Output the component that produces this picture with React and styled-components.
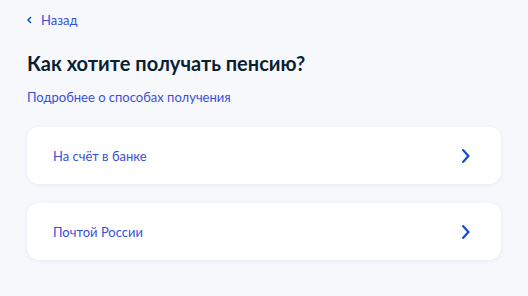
import React from "react";
import styled, { createGlobalStyle } from "styled-components";

const Global = createGlobalStyle`
  html, body { margin: 0; padding: 0; background: #f6f8fc; }
  body { font-family: Lato, "Noto Sans", sans-serif; }
`;

const Page = styled.div`
  box-sizing: border-box;
  width: 528px;
  min-height: 296px;
  padding: 11px 27px 0 27px;
  background: #f6f8fc;
  display: flex;
  flex-direction: column;
`;

const Back = styled.a`
  display: flex;
  align-items: center;
  gap: 9px;
  font-size: 13px;
  line-height: 18px;
  color: #3a50d6;
  text-decoration: none;
`;

const Title = styled.h1`
  margin: 21px 0 0 0;
  font-size: 20px;
  line-height: 26px;
  font-weight: 700;
  color: #0b1f33;
`;

const More = styled.a`
  margin-top: 11px;
  font-size: 13px;
  line-height: 20px;
  color: #3a50d6;
  text-decoration: none;
`;

const List = styled.div`
  margin-top: 20px;
  display: flex;
  flex-direction: column;
  gap: 19px;
  width: 474px;
`;

const Card = styled.div`
  height: 57px;
  box-sizing: border-box;
  padding: 0 31px 0 26px;
  background: #fff;
  border-radius: 12px;
  box-shadow: 0 1px 4px rgba(40, 70, 140, 0.08);
  display: flex;
  align-items: center;
  justify-content: space-between;
  font-size: 13px;
  color: #3a50d6;
`;

const Chevron = ({ w = 8, h = 14, sw = 2.2 }) => (
  <svg width={w} height={h} viewBox={`0 0 ${w} ${h}`} fill="none">
    <path
      d={`M1.2 1.2 L${w - 1.6} ${h / 2} L1.2 ${h - 1.2}`}
      stroke="#0d4cd3"
      strokeWidth={sw}
      strokeLinecap="square"
      strokeLinejoin="miter"
    />
  </svg>
);

const BackIcon = () => (
  <svg width="5" height="8" viewBox="0 0 5 8" fill="none">
    <path d="M4 1 L1 4 L4 7" stroke="#0d4cd3" strokeWidth="1.5" />
  </svg>
);

export default function App() {
  return (
    <>
      <Global />
      <Page>
        <Back href="#">
          <BackIcon />
          Назад
        </Back>
        <Title>Как хотите получать пенсию?</Title>
        <More href="#">Подробнее о способах получения</More>
        <List>
          <Card>
            На счёт в банке
            <Chevron />
          </Card>
          <Card>
            Почтой России
            <Chevron />
          </Card>
        </List>
      </Page>
    </>
  );
}
